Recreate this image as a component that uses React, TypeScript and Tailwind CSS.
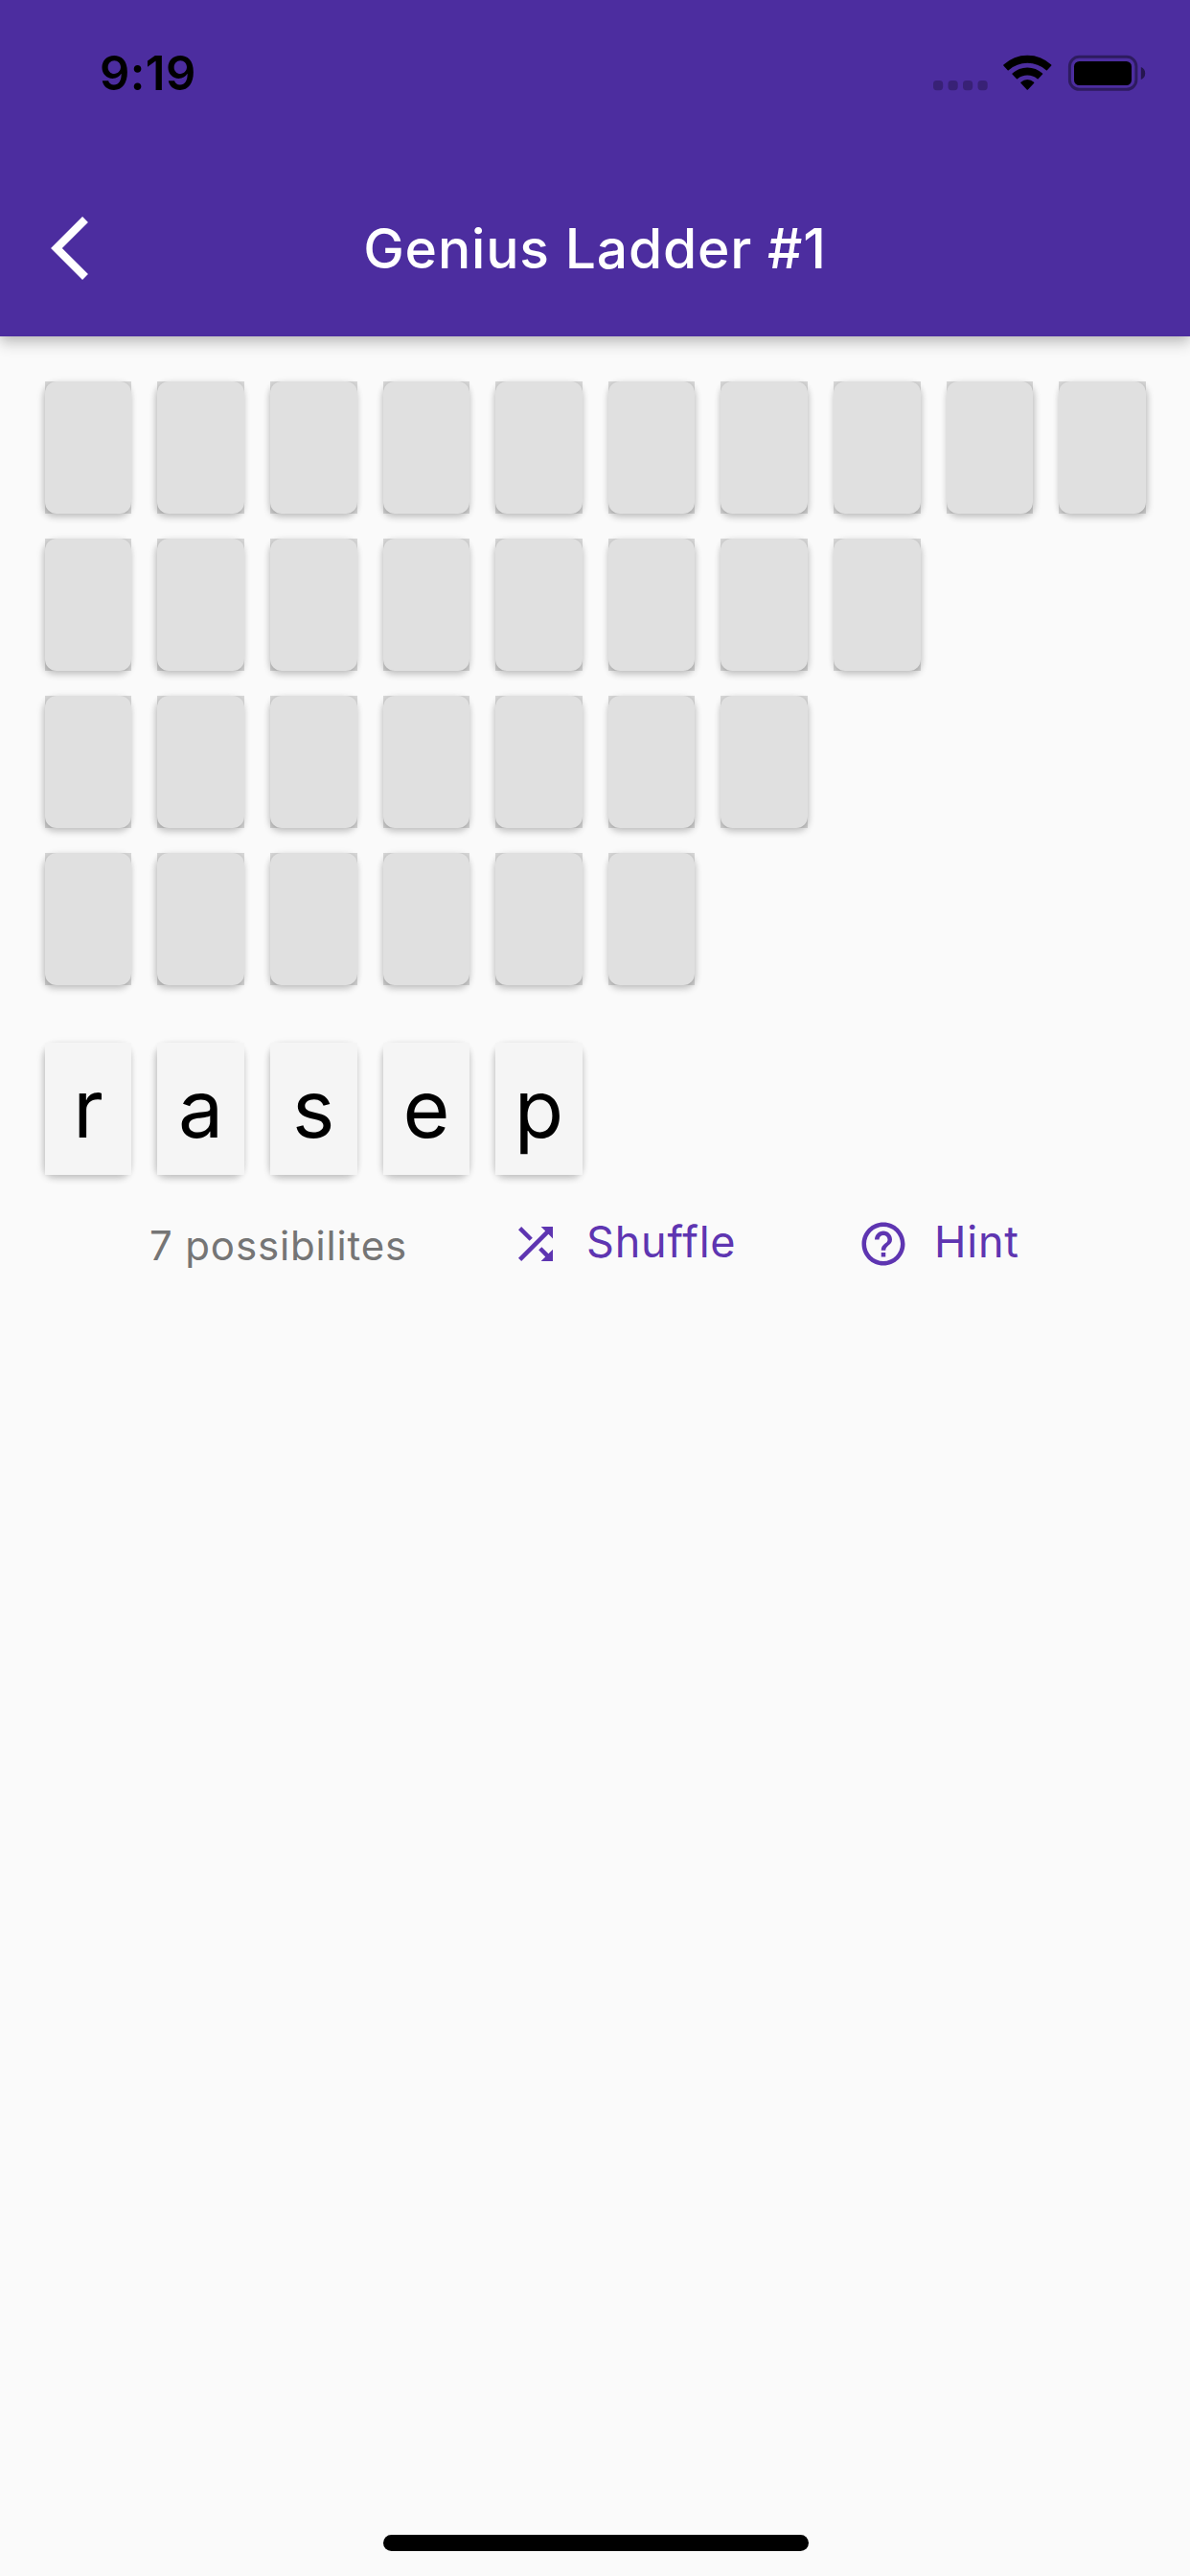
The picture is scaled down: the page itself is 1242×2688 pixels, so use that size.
import React from "react";

const COLUMNS = [0, 1, 2, 3, 4, 5, 6, 7, 8, 9];
const ROWS = [10, 8, 7, 6];
const LETTERS = ["r", "a", "s", "e", "p"];

// The light sits above the middle of the screen, so shadows lean outwards.
function shadowFor(column: number) {
  const lean = ((column - 4.5) * 0.4).toFixed(2);
  return `${lean}px 4px 7px rgba(0,0,0,0.2), 0px 0px 7px rgba(0,0,0,0.07)`;
}

function EmptyTile({ column }: { column: number }) {
  return (
    <div className="h-[138px] w-[90.6px] bg-[#d8d8d8]">
      <div
        className="h-full w-full rounded-[12px] bg-[#e0e0e0]"
        style={{ boxShadow: shadowFor(column) }}
      />
    </div>
  );
}

function LetterTile({ letter, column }: { letter: string; column: number }) {
  return (
    <div
      className="h-[138px] w-[90.6px] rounded-[12px]"
      style={{ boxShadow: shadowFor(column) }}
    >
      <div className="flex h-full w-full items-start justify-center bg-[#f5f5f5] pt-[19px] text-[84px] leading-[100px] text-black">
        {letter}
      </div>
    </div>
  );
}

function StatusIcons() {
  return (
    <svg width="222" height="38" viewBox="974 57 222 38" fill="#000">
      <g opacity="0.25">
        <rect x="974" y="84" width="10.2" height="10.2" rx="3.6" />
        <rect x="989.5" y="84" width="10.2" height="10.2" rx="3.6" />
        <rect x="1005" y="84" width="10.2" height="10.2" rx="3.6" />
        <rect x="1020.5" y="84" width="10.2" height="10.2" rx="3.6" />
      </g>
      <path d="M1047.3 68.6 Q1047 68.1 1047.4 67.6 Q1058 57.7 1072.3 57.7 Q1086.600 57.7 1097.200 67.6 Q1097.600 68.1 1097.300 68.6 L1092.900 73.200 Q1092.400 73.600 1091.900 73.200 Q1083.500 65.700 1072.300 65.700 Q1061.100 65.700 1052.700 73.200 Q1052.200 73.600 1051.700 73.200 Z" />
      <path d="M1056.500 77.500 Q1056.100 77 1056.600 76.500 Q1063.300 70.500 1072.300 70.500 Q1081.300 70.500 1088 76.500 Q1088.500 77 1088.100 77.500 L1083.600 82.200 Q1083.100 82.600 1082.600 82.200 Q1078.200 78.500 1072.300 78.500 Q1066.400 78.500 1062 82.200 Q1061.500 82.600 1061 82.200 Z" />
      <path d="M1065.400 86.700 Q1064.900 86.200 1065.500 85.700 Q1068.400 83.100 1072.300 83.100 Q1076.200 83.100 1079.100 85.700 Q1079.700 86.200 1079.200 86.700 L1072.900 93.500 Q1072.300 94.100 1071.700 93.500 Z" />
      <rect x="1116.400" y="59.300" width="69.500" height="34" rx="10" fill="none" stroke="#000" strokeOpacity="0.4" strokeWidth="3" />
      <rect x="1121" y="64" width="60" height="25" rx="5.500" />
      <path d="M1190.800 70 Q1195.200 71.800 1195.200 76.500 Q1195.200 81.200 1190.800 83 Z" opacity="0.5" />
    </svg>
  );
}

export default function App() {
  return (
    <div className="flex h-[2688px] w-[1242px] flex-col overflow-hidden bg-[#fafafa] font-['Inter',sans-serif]">
      <header className="h-[351px] shrink-0 bg-[#4c2d9f] shadow-[0px_8px_14px_rgba(0,0,0,0.17),0px_2px_12px_rgba(0,0,0,0.12)]">
        <div className="flex h-[171px] items-start justify-between pr-[46px] pl-[104px]">
          <span className="mt-[47px] text-[49px] leading-[60px] font-semibold tracking-[0.4px] text-black">
            9:19
          </span>
          <div className="mt-[57px]">
            <StatusIcons />
          </div>
        </div>
        <div className="grid h-[176px] grid-cols-[240px_1fr_240px] items-center">
          <svg className="ml-[53px]" width="39" height="66" viewBox="0 2.1 11.67 19.8" fill="#fff">
            <path d="M11.67 3.87L9.9 2.1 0 12l9.9 9.9 1.77-1.77L3.54 12z" />
          </svg>
          <h1 className="pt-[2px] text-center text-[57px] leading-[70px] font-medium tracking-[0.8px] whitespace-nowrap text-white">
            Genius Ladder #1
          </h1>
        </div>
      </header>

      <main className="flex flex-1 flex-col">
        <section className="mt-[47px] flex flex-col gap-[26px] pl-[46.8px]">
          {ROWS.map((length) => (
            <div key={length} className="flex gap-[27px]">
              {COLUMNS.slice(0, length).map((column) => (
                <EmptyTile key={column} column={column} />
              ))}
            </div>
          ))}
        </section>

        <section className="mt-[60px] flex gap-[27px] pl-[46.8px]">
          {LETTERS.map((letter, column) => (
            <LetterTile key={letter} letter={letter} column={column} />
          ))}
        </section>

        <section className="mt-[45px] flex h-[54px] items-center pl-[156px] whitespace-nowrap">
          <span className="w-[376px] pt-[3px] text-[42px] leading-[54px] tracking-[0.85px] text-[#757575]">
            7 possibilites
          </span>
          <button className="flex h-[54px] w-[363px] items-center gap-[26px] text-[45px] leading-[54px] tracking-[0.8px] text-[#5e35b1]">
            <svg width="54" height="54" viewBox="0 0 24 24" fill="currentColor">
              <path d="M10.590 9.170L5.410 4 4 5.410l5.170 5.170 1.420-1.410zM14.500 4l2.040 2.040L4 18.590 5.410 20 17.960 7.460 20 9.500V4h-5.500zm.33 9.410l-1.410 1.410 3.130 3.130L14.500 20H20v-5.500l-2.040 2.040-3.130-3.130z" />
            </svg>
            <span className="pb-[4px]">Shuffle</span>
          </button>
          <button className="flex h-[54px] items-center gap-[26px] text-[45px] leading-[54px] tracking-[0.8px] text-[#5e35b1]">
            <svg width="54" height="54" viewBox="0 0 24 24" fill="currentColor">
              <path d="M11 18h2v-2h-2v2zm1-16C6.480 2 2 6.480 2 12s4.480 10 10 10 10-4.480 10-10S17.520 2 12 2zm0 18c-4.410 0-8-3.590-8-8s3.590-8 8-8 8 3.590 8 8-3.590 8-8 8zm0-14c-2.210 0-4 1.790-4 4h2c0-1.100.9-2 2-2s2 .9 2 2c0 2-3 1.750-3 5h2c0-2.250 3-2.500 3-5 0-2.210-1.790-4-4-4z" />
            </svg>
            <span className="pb-[4px]">Hint</span>
          </button>
        </section>
      </main>

      <footer className="flex h-[43px] shrink-0 justify-center pl-[2px]">
        <div className="h-[17px] w-[444px] rounded-full bg-black" />
      </footer>
    </div>
  );
}
